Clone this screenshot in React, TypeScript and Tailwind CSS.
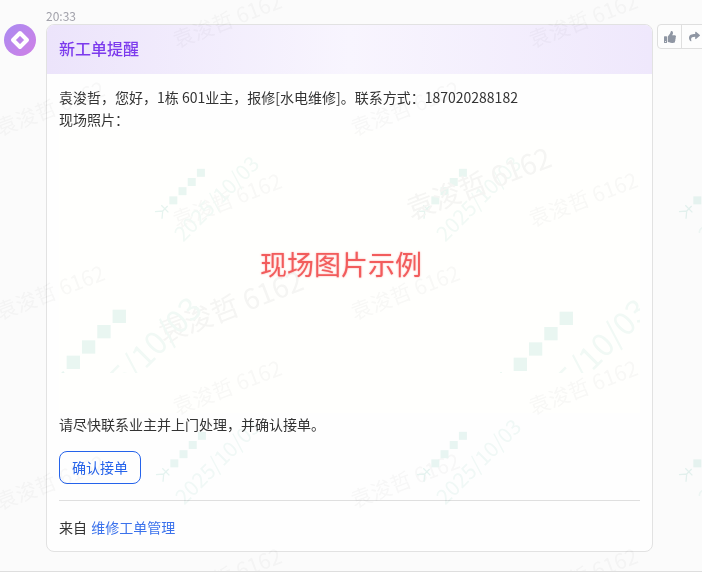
import { FaShare, FaThumbsUp } from 'react-icons/fa';

const nameMarks = [
  { x: 227, y: 20 },
  { x: 583, y: 20 },
  { x: 50, y: 108 },
  { x: 405, y: 108 },
  { x: 227, y: 200 },
  { x: 583, y: 199 },
  { x: 50, y: 292 },
  { x: 405, y: 292 },
  { x: 227, y: 387 },
  { x: 583, y: 387 },
  { x: 50, y: 482 },
  { x: 405, y: 480 },
  { x: 227, y: 575 },
  { x: 583, y: 575 },
];

const bigNames = [
  { x: 478, y: 182 },
  { x: 230, y: 305 },
];

const dateMarks = [
  { x: 216, y: 198 },
  { x: 478, y: 198 },
  { x: 740, y: 198 },
  { x: 217, y: 461 },
  { x: 478, y: 461 },
  { x: 740, y: 461 },
];

// offsets inside the image box, which starts at 59,130
const bigDates = [
  { x: 76, y: 230 },
  { x: 523, y: 232 },
];

const DiamondRow = ({ big }: { big?: boolean }) => (
  <svg
    viewBox="0 0 72 12"
    className={big ? 'h-[20px] w-[120px]' : 'h-3 w-[72px]'}
    fill="none"
  >
    <path d="M2 1 8 6 2 11M8 6H15M11 1V11" stroke="#e6f4f1" strokeWidth="1.3" />
    <g fill="#e9f6f3">
      <rect x="19" y="2" width="8" height="8" transform="rotate(45 23 6)" />
      <rect x="32" y="2" width="8" height="8" transform="rotate(45 36 6)" />
      <rect x="45" y="2" width="8" height="8" transform="rotate(45 49 6)" />
      <rect x="58" y="2" width="8" height="8" transform="rotate(45 62 6)" />
    </g>
  </svg>
);

const Watermarks = () => (
  <div className="pointer-events-none absolute inset-0 overflow-hidden mix-blend-multiply">
    {nameMarks.map((m, i) => (
      <span
        key={i}
        className="absolute -translate-x-1/2 -translate-y-1/2 -rotate-[21deg] whitespace-nowrap text-[21px] text-[#f8f8f8]"
        style={{ left: m.x, top: m.y }}
      >
        袁浚哲 6162
      </span>
    ))}
    {dateMarks.map((m, i) => (
      <div
        key={i}
        className="absolute -translate-x-1/2 -translate-y-1/2 -rotate-45 whitespace-nowrap text-[21px] leading-none text-[#f1f9f7]"
        style={{ left: m.x, top: m.y }}
      >
        <div className="absolute -top-[24px] left-0">
          <DiamondRow />
        </div>
        2025/10/03
      </div>
    ))}
    <div className="absolute left-[59px] top-[130px] h-[243px] w-[581px] overflow-hidden">
      {bigNames.map((m, i) => (
        <span
          key={i}
          className="absolute -translate-x-1/2 -translate-y-1/2 -rotate-[21deg] whitespace-nowrap text-[28px] text-[#f5f5f5]"
          style={{ left: m.x - 59, top: m.y - 130 }}
        >
          袁浚哲 6162
        </span>
      ))}
      {bigDates.map((m, i) => (
        <div
          key={i}
          className="absolute -translate-x-1/2 -translate-y-1/2 -rotate-45 whitespace-nowrap text-[32px] leading-none text-[#f1f9f7]"
          style={{ left: m.x, top: m.y }}
        >
          <div className="absolute -top-[36px] left-0">
            <DiamondRow big />
          </div>
          2025/10/03
        </div>
      ))}
    </div>
  </div>
);

const App = () => {
  return (
    <div className="relative h-[572px] w-[702px] overflow-hidden border-b border-[#dedede] bg-[#fbfbfb] font-['Noto_Sans_CJK_SC','Noto_Sans',sans-serif] text-[14px] text-[#333]">
      <div className="flex items-start pl-1 pt-2.5">
        <div className="mr-2.5 mt-3.5 flex h-8 w-8 shrink-0 items-center justify-center rounded-full bg-gradient-to-br from-[#a98bf1] to-[#d07fe6]">
          <svg viewBox="0 0 32 32" className="h-8 w-8" fill="none">
            <path d="M16 9 23 16 16 23 9 16Z" stroke="#fff" strokeWidth="4" strokeLinejoin="round" />
          </svg>
        </div>

        <div className="w-[607px] shrink-0">
          <div className="h-3.5 text-[12px] leading-[12px] text-[#a1a1aa]">20:33</div>
          <div className="overflow-hidden rounded-lg border border-[#e2e2e2] bg-[#fefefe]">
            <div className="flex h-[49px] items-center bg-gradient-to-r from-[#ece4fb] via-[#f8f5fe] to-[#efe8fc] pb-[3px] pl-3 text-[16px] font-medium text-[#7c3aed]">
              新工单提醒
            </div>
            <div className="px-3 pb-[13px]">
              <p className="mt-3 leading-[22px]">
                袁浚哲，您好，1栋 601业主，报修[水电维修]。联系方式：187020288182
                <br />
                现场照片：
              </p>
              <div className="flex h-[283px] items-center justify-center bg-[#fffffd] pb-[14px] pr-[17px] text-[27px] text-[#f25c5c] [text-shadow:0_0_2px_#f9a8a8]">
                现场图片示例
              </div>
              <p className="leading-[22px]">请尽快联系业主并上门处理，并确认接单。</p>
              <button className="mt-[16px] h-[33px] w-[82px] rounded-lg border border-[#2563eb] text-[14px] text-[#2563eb]">
                确认接单
              </button>
              <div className="mt-4 border-t border-[#dfdfdf] pt-[15px] leading-[22px]">
                来自 <span className="ml-px text-[#3b72ec]">维修工单管理</span>
              </div>
            </div>
          </div>
        </div>

        <div className="ml-1 mt-3.5 flex h-[25px] shrink-0 rounded-l border border-[#dfdfdf] bg-[#fdfdfd] text-[#8f96a3]">
          <div className="flex w-6 items-center justify-center border-r border-[#dfdfdf]">
            <FaThumbsUp size={12} />
          </div>
          <div className="flex w-6 items-center justify-center">
            <FaShare size={11} />
          </div>
        </div>
      </div>
      <Watermarks />
    </div>
  );
};

export default App;
